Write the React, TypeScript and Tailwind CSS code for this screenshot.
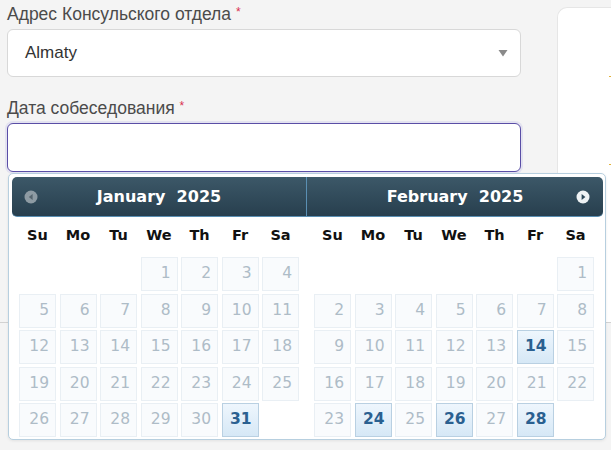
import type { ReactNode } from 'react';

type Cell = { day: number; active?: boolean } | null;

const DAYS = ['Su', 'Mo', 'Tu', 'We', 'Th', 'Fr', 'Sa'];

function buildMonth(offset: number, total: number, active: number[]): Cell[] {
  const cells: Cell[] = [];
  for (let i = 0; i < offset; i++) cells.push(null);
  for (let d = 1; d <= total; d++) cells.push({ day: d, active: active.includes(d) });
  while (cells.length % 7 !== 0) cells.push(null);
  return cells;
}

const JANUARY = buildMonth(3, 31, [31]);
const FEBRUARY = buildMonth(6, 28, [14, 24, 26, 28]);

function Label({ children }: { children: ReactNode }) {
  return (
    <div className="h-[20px] text-[17.5px] leading-[20px] text-[#4b4b4b]">
      {children} <span className="relative -top-[4px] text-[12px] text-[#d9304f]">*</span>
    </div>
  );
}

function NavIcon({ dir, disabled }: { dir: 'prev' | 'next'; disabled?: boolean }) {
  return (
    <svg width="14" height="14" viewBox="0 0 14 14" className="shrink-0">
      <circle cx="7" cy="7" r="6.5" fill={disabled ? '#8e9ba3' : '#eef2f4'} />
      {dir === 'prev' ? (
        <path d="M8.6 4 L4.8 7 L8.6 10 Z" fill={disabled ? '#56656e' : '#2d4858'} />
      ) : (
        <path d="M5.6 4 L9.4 7 L5.6 10 Z" fill={disabled ? '#56656e' : '#2d4858'} />
      )}
    </svg>
  );
}

function Month({
  title,
  cells,
  side,
}: {
  title: string;
  cells: Cell[];
  side: 'left' | 'right';
}) {
  return (
    <div className="flex flex-col">
      <div
        className={
          side === 'left'
            ? 'relative flex h-[40px] w-[294px] items-center justify-center rounded-l-[5px] border-b border-[#5a8fb3] bg-gradient-to-b from-[#3c5868] to-[#283f4e]'
            : 'relative flex h-[40px] w-[297px] items-center justify-center rounded-r-[5px] border-b border-l border-[#5a8fb3] bg-gradient-to-b from-[#3c5868] to-[#283f4e]'
        }
      >
        {side === 'left' ? (
          <span className="absolute left-[12px] top-[13px]">
            <NavIcon dir="prev" disabled />
          </span>
        ) : (
          <span className="absolute right-[13px] top-[13px]">
            <NavIcon dir="next" />
          </span>
        )}
        <span className="whitespace-pre font-['DejaVu_Sans',sans-serif] text-[16px] font-bold text-white">
          {title}
        </span>
      </div>
      <div className={side === 'left' ? 'pl-[7px]' : 'pl-[8px]'}>
        <div className="grid h-[36px] grid-cols-[repeat(7,37px)] items-center gap-x-[3.5px] pt-[2px]">
          {DAYS.map((d) => (
            <div
              key={d}
              className="text-center font-['DejaVu_Sans',sans-serif] text-[14.5px] font-bold text-[#111]"
            >
              {d}
            </div>
          ))}
        </div>
        <div className="mt-[4px] grid grid-cols-[repeat(7,37px)] auto-rows-[34px] gap-x-[3.5px] gap-y-[2.5px]">
          {cells.map((c, i) =>
            c === null ? (
              <div key={i} />
            ) : c.active ? (
              <div
                key={i}
                className="flex items-center justify-end border border-[#b9d0e2] bg-gradient-to-b from-[#eef6fd] to-[#d6e8f6] pr-[6px] font-['DejaVu_Sans',sans-serif] text-[15.5px] font-semibold text-[#2a6090]"
              >
                {c.day}
              </div>
            ) : (
              <div
                key={i}
                className="flex items-center justify-end border border-[#e9eff4] bg-[#f9fbfd] pr-[6px] font-['DejaVu_Sans',sans-serif] text-[15.5px] text-[#aebcc7]"
              >
                {c.day}
              </div>
            ),
          )}
        </div>
      </div>
    </div>
  );
}

export default function App() {
  return (
    <div className="relative h-[450px] w-[611px] overflow-hidden bg-[#f4f4f4] font-['Liberation_Sans',Arial,sans-serif]">
      <div className="flex h-[323px] border-b border-[#d2d2d2]">
        <div className="ml-[7px] w-[514px] pt-[4px]">
          <Label>Адрес Консульского отдела</Label>
          <div className="mt-[5px] flex h-[48px] items-center justify-between rounded-[6px] border border-[#d8d8d8] bg-white pl-[17px] pr-[12px]">
            <span className="text-[17px] text-[#333]">Almaty</span>
            <svg width="10" height="8" viewBox="0 0 10 8">
              <path d="M0.5 1 L9.5 1 L5 7.5 Z" fill="#8a8a8a" />
            </svg>
          </div>
          <div className="mt-[21px]">
            <Label>Дата собеседования</Label>
          </div>
          <div className="mt-[5px] h-[49px] rounded-[6px] border border-[#5a4ea6] bg-white shadow-[0_0_0_2px_rgba(110,100,210,0.12)]" />
        </div>
        <div className="relative ml-[36px] mt-[7px] flex-1 rounded-tl-[10px] border-l border-t border-[#e6e6e6] bg-white">
          <span className="absolute right-0 top-[68px] h-[1px] w-[2px] bg-[#e2b23a]" />
          <span className="absolute right-0 top-[156px] h-[1px] w-[2px] bg-[#e2b23a]" />
        </div>
      </div>

      <div className="absolute left-[8px] top-[173px] h-[267px] w-[598px] rounded-[5px] border border-[#b7cfdf] bg-white p-[3px] shadow-[0_1px_3px_rgba(0,0,0,0.08)]">
        <div className="flex">
          <Month title="January  2025" cells={JANUARY} side="left" />
          <Month title="February  2025" cells={FEBRUARY} side="right" />
        </div>
      </div>
    </div>
  );
}
